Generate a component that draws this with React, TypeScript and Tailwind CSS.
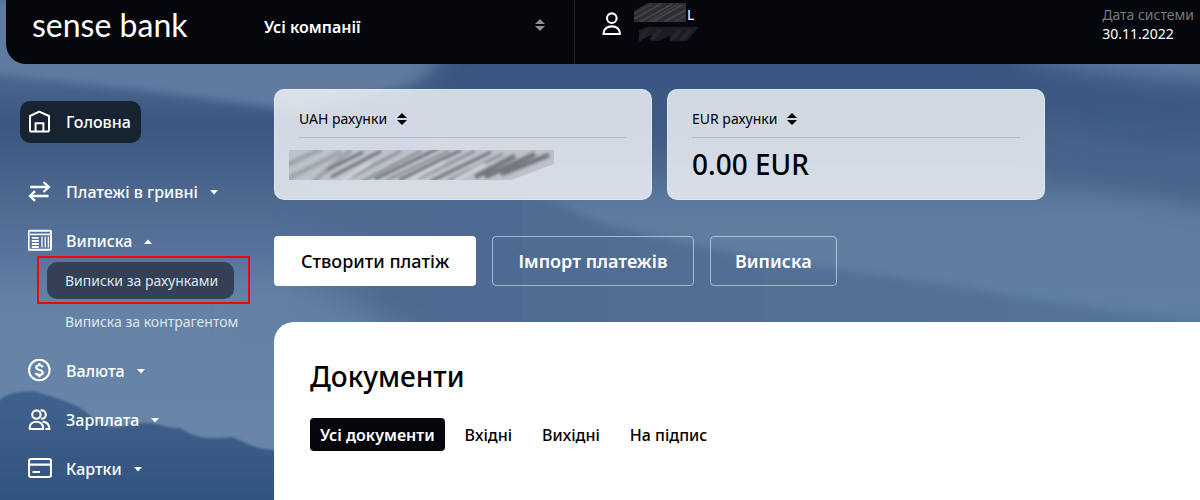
import React, { useState } from 'react';

type IconProps = { className?: string };

const HomeIcon: React.FC<IconProps> = ({ className }) => (
  <svg viewBox="0 0 24 24" className={className} fill="none" stroke="currentColor" strokeWidth="2">
    <path d="M2 6 L11.2 1.6 L21 6 V20 Q21 21.6 19.4 21.6 H3.6 Q2 21.6 2 20 Z" strokeLinejoin="round" />
    <path d="M7.6 21.5 V13.2 H15.4 V21.5" />
  </svg>
);

const TransferIcon: React.FC<IconProps> = ({ className }) => (
  <svg viewBox="0 0 24 24" className={className} fill="none" stroke="currentColor" strokeWidth="2.3">
    <path d="M2 7 H20.5 M15.5 2 L20.8 7 L15.5 12" />
    <path d="M20.5 16 H2.5 M7 11.2 L2 16 L7 20.8" />
  </svg>
);

const StatementIcon: React.FC<IconProps> = ({ className }) => (
  <svg viewBox="0 0 24 24" className={className} fill="none" stroke="currentColor" strokeWidth="2">
    <rect x="0.6" y="1.8" width="22.4" height="19" rx="1" />
    <path d="M2 5.4 H22" strokeWidth="1.6" />
    <path d="M3.8 8.8 H10.8 M3.8 12 H10.8 M3.8 15 H10.8 M3.8 18 H10.8" strokeWidth="1.8" />
    <path d="M14 7.5 V18.6 M17.2 7.5 V18.6 M20.3 7.5 V18.6" strokeWidth="1.3" />
  </svg>
);

const CurrencyIcon: React.FC<IconProps> = ({ className }) => (
  <svg viewBox="0 0 24 24" className={className} fill="none" stroke="currentColor" strokeWidth="2.1">
    <circle cx="11.3" cy="11" r="10.3" />
    <path d="M14.7 8.3 C14.3 6.8 13 6.3 11.4 6.3 C9.5 6.3 8.2 7.1 8.2 8.6 C8.2 11.7 14.8 10.1 14.8 13.5 C14.8 15 13.3 15.9 11.4 15.9 C9.5 15.9 8.1 15.2 7.8 13.7 M11.4 4 V6.5 M11.4 15.7 V18.2" />
  </svg>
);

const PeopleIcon: React.FC<IconProps> = ({ className }) => (
  <svg viewBox="0 0 24 24" className={className} fill="none" stroke="currentColor" strokeWidth="2.1">
    <circle cx="8.4" cy="6.6" r="4.2" />
    <path d="M1.8 21 V19.4 C1.8 16 4.6 13.8 8.4 13.8 C12.2 13.8 15 16 15 19.4 V21 Z" strokeLinejoin="round" />
    <path d="M12.5 2.6 C15.6 1.8 17.8 3.8 17.8 6.6 C17.8 9.4 15.6 11.2 13 10.6 M14.5 13.6 C18.6 13.8 21.2 16.6 21.4 21 H17.4" />
  </svg>
);

const CardIcon: React.FC<IconProps> = ({ className }) => (
  <svg viewBox="0 0 24 24" className={className} fill="none" stroke="currentColor" strokeWidth="2.1">
    <rect x="1" y="2" width="22" height="18" rx="2" />
    <path d="M1 7.6 H23 M4.5 15 H12" />
  </svg>
);

const UserIcon: React.FC<IconProps> = ({ className }) => (
  <svg viewBox="0 0 20 24" className={className} fill="none" stroke="currentColor" strokeWidth="2.1">
    <circle cx="9.8" cy="6.2" r="4.8" />
    <path d="M1.4 22 C1.4 17 5 14.4 9.8 14.4 C14.6 14.4 18 17 18 22 Z" strokeLinejoin="round" />
  </svg>
);

const SortIcon: React.FC<IconProps> = ({ className }) => (
  <svg viewBox="0 0 10 12" className={className} fill="currentColor">
    <path d="M5 0 L10 5 H0 Z M0 7 H10 L5 12 Z" />
  </svg>
);

const Caret: React.FC<{ up?: boolean }> = ({ up }) => (
  <svg viewBox="0 0 8 5" className="w-2 h-[5px] -ml-0.5" fill="currentColor">
    <path d={up ? 'M0 5 L4 0.5 L8 5 Z' : 'M0 0 H8 L4 4.5 Z'} />
  </svg>
);

const Landscape = () => (
  <svg
    className="absolute inset-0 w-full h-full"
    viewBox="0 0 1200 500"
    preserveAspectRatio="none"
    aria-hidden="true"
  >
    <defs>
      <linearGradient id="sky" x1="0" y1="0" x2="0" y2="1">
        <stop offset="0.13" stopColor="#4d6b93" />
        <stop offset="0.25" stopColor="#3b5781" />
        <stop offset="0.4" stopColor="#4e6990" />
        <stop offset="0.5" stopColor="#56739b" />
        <stop offset="0.6" stopColor="#6482a6" />
        <stop offset="1" stopColor="#6987a9" />
      </linearGradient>
      <linearGradient id="haze" gradientUnits="userSpaceOnUse" x1="0" y1="60" x2="0" y2="300">
        <stop offset="0" stopColor="#385580" />
        <stop offset="0.35" stopColor="#405d87" />
        <stop offset="0.62" stopColor="#5f7da1" />
        <stop offset="1" stopColor="#617fa3" />
      </linearGradient>
      <linearGradient id="ridge" gradientUnits="userSpaceOnUse" x1="0" y1="390" x2="0" y2="500">
        <stop offset="0" stopColor="#42618d" />
        <stop offset="1" stopColor="#32557f" />
      </linearGradient>
      <linearGradient id="slope" gradientUnits="userSpaceOnUse" x1="274" y1="0" x2="1200" y2="0">
        <stop offset="0" stopColor="#4f6a91" stopOpacity="0" />
        <stop offset="0.12" stopColor="#4f6a91" />
        <stop offset="1" stopColor="#56749a" />
      </linearGradient>
      <filter id="soft" filterUnits="userSpaceOnUse" x="-100" y="-100" width="1400" height="700">
        <feGaussianBlur stdDeviation="12" />
      </filter>
      <filter id="edge" filterUnits="userSpaceOnUse" x="-100" y="-100" width="1400" height="700">
        <feGaussianBlur stdDeviation="4" />
      </filter>
      <filter id="crisp" filterUnits="userSpaceOnUse" x="-100" y="-100" width="1400" height="700">
        <feGaussianBlur stdDeviation="1" />
      </filter>
    </defs>
    <rect width="1200" height="500" fill="url(#sky)" />
    <path d="M-40 0 H540 L420 82 L300 112 C180 92 80 84 -40 70 Z" fill="#5f7ca0" filter="url(#edge)" />
    <path d="M470 0 H1280 V360 H600 L560 220 L380 140 L430 76 Z" fill="url(#haze)" filter="url(#soft)" />
    <path d="M1010 30 H1280 V84 C1160 80 1070 72 1010 50 Z" fill="#607da1" filter="url(#soft)" />
    <path d="M1045 120 C1100 145 1150 158 1280 160 V225 C1140 190 1090 180 1045 182 Z" fill="#4a648b" filter="url(#soft)" />
    <path
      d="M274 180 H500 L600 222 C700 250 830 270 960 286 C1060 306 1130 312 1260 326 V340 H274 Z"
      fill="url(#slope)"
      filter="url(#edge)"
    />
    <path d="M240 300 C290 286 350 306 430 340 H240 Z" fill="#6280a4" filter="url(#soft)" />
    <path
      d="M-40 420 L0 400 C8 391 24 392 34 391 C50 396 70 402 80 408 C92 416 100 427 112 427 C124 428 136 422 148 423 C162 424 168 429 180 428 C194 438 210 440 232 437 C246 443 258 450 274 450 H340 V560 H-40 Z"
      fill="url(#ridge)"
      filter="url(#crisp)"
    />
  </svg>
);

const navItems = [
  { label: 'Головна', icon: HomeIcon, active: true },
  { label: 'Платежі в гривні', icon: TransferIcon, expandable: true },
  {
    label: 'Виписка',
    icon: StatementIcon,
    expandable: true,
    children: ['Виписки за рахунками', 'Виписка за контрагентом'],
  },
  { label: 'Валюта', icon: CurrencyIcon, expandable: true },
  { label: 'Зарплата', icon: PeopleIcon, expandable: true },
  { label: 'Картки', icon: CardIcon, expandable: true },
];

const tabs = ['Усі документи', 'Вхідні', 'Вихідні', 'На підпис'];

const Header = () => (
  <header className="relative ml-[6px] h-16 rounded-bl-[20px] bg-[#05070d] text-white flex">
    <a href="#" className="w-[258px] shrink-0 pl-[26px] pt-[5px] [font-family:Lato,sans-serif] text-[32px] leading-10">
      sense bank
    </a>
    <div className="w-[311px] shrink-0 h-full border-r border-[#24262c] relative">
      <select
        aria-label="Компанія"
        className="appearance-none w-full h-[54px] bg-transparent font-semibold text-base outline-none"
      >
        <option>Усі компанії</option>
      </select>
      <SortIcon className="absolute right-[29px] top-[19px] w-[10px] h-3 text-[#8b8d91] pointer-events-none" />
    </div>
    <div className="flex pl-[27px] gap-3">
      <UserIcon className="w-5 h-6 mt-3" />
      <div className="pt-[3px]">
        <div className="flex items-start">
          <svg viewBox="0 0 52 19" className="w-[52px] h-[19px]">
            <path d="M0 8 L14 0 H52 V19 H0 Z" fill="#2c2e31" />
            <path d="M0 16 L27 1 M6 19 L38 1 M18 19 L48 2 M30 19 L52 7" stroke="#434546" strokeWidth="2" />
            <path d="M0 11 L18 1 M14 19 L44 1 M40 19 L52 12" stroke="#3b3d3f" strokeWidth="2" />
          </svg>
          <span className="text-sm leading-6 pl-px">L</span>
        </div>
        <svg viewBox="0 0 60 14" className="w-[60px] h-[14px] ml-[5px]">
          <path d="M0 3 L8 0 H60 L48 14 H31 V9 L20 14 H13 V8 L0 14 Z" fill="#1d1b23" />
          <path d="M0 13 L9 2 M12 13 L22 3 M32 13 L41 3 M42 13 L52 3" stroke="#28242d" strokeWidth="4" />
        </svg>
      </div>
    </div>
    <div className="ml-auto pr-[6px] pt-[5px] text-sm leading-[19px]">
      <div className="text-[#77787b]">Дата системи</div>
      <div>30.11.2022</div>
    </div>
  </header>
);

const Sidebar = () => (
  <nav className="w-[274px] shrink-0 pl-5 pt-[37px] text-white">
    <ul className="flex flex-col gap-[7px]">
      {navItems.map(({ label, icon: Icon, active, expandable, children }) => (
        <li key={label} className={active ? 'mb-[21px]' : children ? 'mb-[3px]' : ''}>
          <button
            className={`h-[42px] px-2 pr-[10px] flex items-center gap-[14px] rounded-[10px] text-base font-medium ${
              active ? 'bg-[#182331]' : ''
            }`}
          >
            <Icon className="w-6 h-6" />
            <span>{label}</span>
            {expandable && <Caret up={!!children} />}
          </button>
          {children && (
            <ul className="pl-[27px] flex flex-col gap-1 text-sm">
              {children.map((child, i) => (
                <li key={child} className="relative">
                  <a
                    href="#"
                    className={`inline-flex items-center h-[37px] pl-[18px] pr-4 rounded-[10px] ${
                      i === 0 ? 'bg-[#334055]' : ''
                    } text-[#dfe5ec]`}
                  >
                    {child}
                  </a>
                  {i === 0 && (
                    <div className="absolute -left-[10px] right-6 -top-[6px] -bottom-[5px] border-2 border-[#f00509] pointer-events-none" />
                  )}
                </li>
              ))}
            </ul>
          )}
        </li>
      ))}
    </ul>
  </nav>
);

const AccountCard: React.FC<{ currency: string; children: React.ReactNode }> = ({ currency, children }) => (
  <section className="flex-1 max-w-[378px] h-[111px] rounded-[10px] border border-white/30 bg-[#f8f9fb]/80 px-6 pt-[19px] text-black">
    <button className="flex items-center gap-[10px] text-sm leading-5">
      {currency} рахунки
      <SortIcon className="w-[10px] h-3" />
    </button>
    <div className="mt-2 border-t border-[#b7bdc7]">{children}</div>
  </section>
);

const Scribble = () => (
  <svg viewBox="0 0 265 30" className="block w-[265px] h-[30px] mt-3 -ml-[10px] overflow-hidden">
    <defs>
      <filter id="smear">
        <feGaussianBlur stdDeviation="1.6" />
      </filter>
    </defs>
    <path d="M0 0 H265 V14 L222 30 H0 Z" fill="#bdc2ca" />
    <g filter="url(#smear)" fill="none" strokeWidth="3">
      <path d="M-4 16 L34 -2 M-4 30 L52 2 M24 32 L62 0" stroke="#9fa4ab" strokeWidth="5" />
      <path d="M38 20 L74 2 M42 27 L92 1 M86 29 L150 -2 M110 30 L172 0 M142 31 L202 2" stroke="#6a6e74" />
      <path d="M62 27 L112 1 M74 31 L132 1 M98 30 L160 1 M130 28 L186 1 M160 30 L214 4" stroke="#8b9096" />
      <path d="M52 31 L82 13 M120 31 L156 12 M166 30 L196 14" stroke="#d3d8e0" />
      <path d="M186 27 L226 6 M196 27 L246 4 M212 24 L260 5" stroke="#73777c" strokeWidth="5" />
    </g>
  </svg>
);

const App: React.FC = () => {
  const [activeTab, setActiveTab] = useState(tabs[0]);

  return (
    <div className="relative min-h-screen flex flex-col overflow-hidden bg-[#5f7ca0] font-['Noto_Sans','Open_Sans',sans-serif]">
      <Landscape />
      <Header />
      <div className="relative flex-1 flex">
        <Sidebar />
        <main className="flex-1 min-w-0 flex flex-col pt-[25px]">
          {/* Account balances */}
          <div className="flex gap-[15px]">
            <AccountCard currency="UAH">
              <Scribble />
            </AccountCard>
            <AccountCard currency="EUR">
              <div className="pt-[6px] text-[28px] leading-10 font-medium">0.00 EUR</div>
            </AccountCard>
          </div>

          {/* Quick actions */}
          <div className="mt-9 flex gap-4 text-lg">
            <button className="h-[50px] min-w-[202px] px-6 rounded bg-white text-black font-medium">
              Створити платіж
            </button>
            <button className="h-[50px] min-w-[202px] px-6 rounded border border-white/50 text-white font-semibold">
              Імпорт платежів
            </button>
            <button className="h-[50px] px-6 rounded border border-white/50 text-white font-semibold">Виписка</button>
          </div>

          {/* Documents */}
          <section className="mt-9 flex-1 rounded-tl-[20px] bg-white px-9 pt-[34px] text-black">
            <h1 className="text-[28px] leading-10 font-medium">Документи</h1>
            <div className="mt-[22px] flex gap-[10px] text-base" role="tablist">
              {tabs.map(tab => (
                <button
                  key={tab}
                  role="tab"
                  aria-selected={tab === activeTab}
                  onClick={() => setActiveTab(tab)}
                  className={`h-[33px] px-[10px] rounded ${
                    tab === activeTab ? 'bg-[#05070d] text-white font-semibold' : 'font-medium'
                  }`}
                >
                  {tab}
                </button>
              ))}
            </div>
          </section>
        </main>
      </div>
    </div>
  );
};

export default App;
